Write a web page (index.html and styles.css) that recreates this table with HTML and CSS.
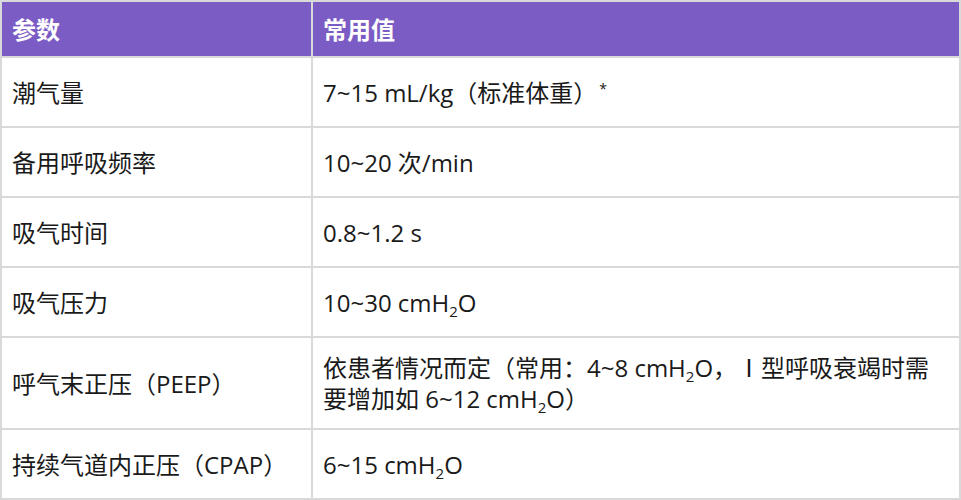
FILE: index.html
```html
<!DOCTYPE html>
<html lang="zh-CN">
<head>
<meta charset="utf-8">
<title>参数</title>
<link rel="stylesheet" href="styles.css">
</head>
<body>
<table class="params">
  <colgroup><col class="c1"><col class="c2"></colgroup>
  <thead>
    <tr class="head"><th>参数</th><th>常用值</th></tr>
  </thead>
  <tbody>
    <tr><td>潮气量</td><td>7~15 mL/kg（标准体重）<sup>*</sup></td></tr>
    <tr><td>备用呼吸频率</td><td>10~20 次/min</td></tr>
    <tr><td>吸气时间</td><td>0.8~1.2 s</td></tr>
    <tr><td>吸气压力</td><td>10~30 cmH<sub>2</sub>O</td></tr>
    <tr><td>呼气末正压（PEEP）</td><td>依患者情况而定（常用：4~8 cmH<sub>2</sub>O，Ⅰ型呼吸衰竭时需要增加如 6~12 cmH<sub>2</sub>O）</td></tr>
    <tr><td>持续气道内正压（CPAP）</td><td>6~15 cmH<sub>2</sub>O</td></tr>
  </tbody>
</table>
</body>
</html>
```
FILE: styles.css
```css
html, body {
  margin: 0;
  padding: 0;
  background: #ffffff;
}
body {
  font-family: "Open Sans", "Noto Sans CJK SC", sans-serif;
  font-size: 24px;
  color: #1a1a1a;
}
.params {
  width: 961px;
  border-collapse: collapse;
  table-layout: fixed;
  border: 2px solid #d9d9d9;
}
.c1 { width: 311px; }
.params tr {
  height: 70px;
}
.params tr.head {
  height: 56px;
}
.params th,
.params td {
  border: 2px solid #d9d9d9;
  text-align: left;
  vertical-align: middle;
  padding: 14px 10px;
  line-height: 31px;
}
.params th {
  background: #7b5cc4;
  color: #ffffff;
  font-weight: 700;
  padding-top: 0;
  padding-bottom: 0;
}
.params sub {
  font-size: 15px;
  line-height: 0;
  vertical-align: -5px;
}
.params sup {
  font-size: 14px;
  line-height: 0;
  vertical-align: 8px;
  margin-left: 2px;
}
```
